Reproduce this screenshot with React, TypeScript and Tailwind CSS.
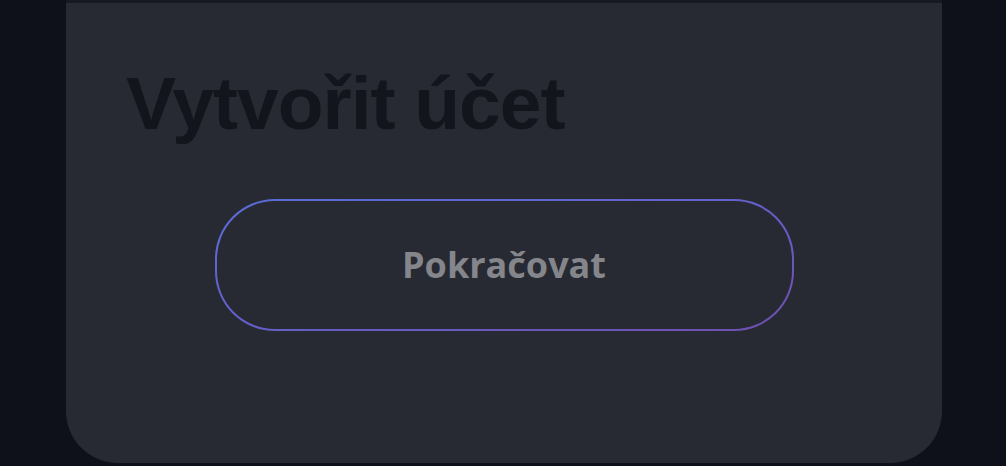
import React from 'react';

export default function App() {
  return (
    <div className="h-[466px] w-full overflow-hidden bg-[#0e1119]">
      <div className="mx-[66px] mr-[64px] flex flex-col">
        {/* header edge */}
        <div className="h-[3px] bg-[#16191f]"></div>

        {/* card */}
        <div className="h-[460px] bg-[#272a32] rounded-b-[52px] flex flex-col">
          <h1
            className="mt-[63px] ml-[60px] text-[75px] leading-none font-bold text-[#12151c] tracking-[-1px]"
            style={{ fontFamily: '"Liberation Sans", Arial, sans-serif' }}
          >
            Vytvořit účet
          </h1>

          <div className="mt-[58px] mx-auto w-[579px] h-[132px] rounded-[60px] p-[2px] bg-gradient-to-br from-[#5a6cd6] via-[#6360c8] to-[#6f4fae]">
            <button
              className="w-full h-full rounded-[58px] bg-[#272a32] flex items-center justify-center text-[36px] font-bold text-[#85868b]"
              style={{ fontFamily: '"Open Sans", "Noto Sans", sans-serif' }}
            >
              Pokračovat
            </button>
          </div>
        </div>
      </div>
    </div>
  );
}
